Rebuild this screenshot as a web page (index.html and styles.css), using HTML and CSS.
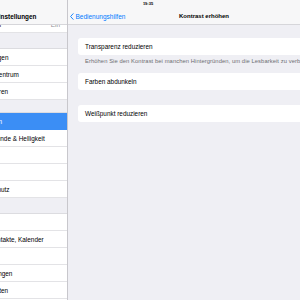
FILE: index.html
```html
<!DOCTYPE html>
<html lang="de">
<head>
    <meta charset="UTF-8">
    <meta name="viewport" content="width=device-width, initial-scale=1.0">
    <title>Kontrast erhöhen</title>
    <link rel="stylesheet" href="styles.css">
</head>
<body>
    <div class="screen">
        <aside class="master">
            <div class="master-inner">
                <header class="master-bar">
                    <span class="bar-title">Einstellungen</span>
                </header>
                <div class="list">
                    <div class="row"><span class="label">Bluetooth</span><span class="value">Ein</span></div>
                    <div class="gap gap-first"></div>
                    <div class="row"><span class="label">Mitteilungen</span></div>
                    <div class="row"><span class="label">Kontrollzentrum</span></div>
                    <div class="row"><span class="label">Nicht stören</span></div>
                    <div class="gap gap-small"></div>
                    <div class="row selected"><span class="label">Allgemein</span></div>
                    <div class="row"><span class="label">Hintergründe &amp; Helligkeit</span></div>
                    <div class="row"><span class="label">Töne</span></div>
                    <div class="row"><span class="label">Code</span></div>
                    <div class="row"><span class="label">Datenschutz</span></div>
                    <div class="gap"></div>
                    <div class="row"><span class="label">iCloud</span></div>
                    <div class="row"><span class="label">Mail, Kontakte, Kalender</span></div>
                    <div class="row"><span class="label">Notizen</span></div>
                    <div class="row"><span class="label">Erinnerungen</span></div>
                    <div class="row"><span class="label">Nachrichten</span></div>
                    <div class="row"><span class="label">FaceTime</span></div>
                </div>
            </div>
        </aside>

        <main class="detail">
            <header class="detail-bar">
                <div class="status">19:35</div>
                <div class="nav">
                    <a class="back">
                        <svg class="chevron" width="4" height="7" viewBox="0 0 4 7">
                            <polyline points="3.4,0.4 0.6,3.5 3.4,6.6" fill="none" stroke="#007aff" stroke-width="0.9"/>
                        </svg>
                        Bedienungshilfen
                    </a>
                    <span class="nav-title">Kontrast erhöhen</span>
                    <span></span>
                </div>
            </header>

            <div class="content">
                <div class="cell">Transparenz reduzieren</div>
                <p class="note">Erhöhen Sie den Kontrast bei manchen Hintergründen, um die Lesbarkeit zu verbessern.</p>
                <div class="cell cell-second">Farben abdunkeln</div>
                <div class="cell cell-third">Weißpunkt reduzieren</div>
            </div>
        </main>
    </div>
</body>
</html>
```

FILE: styles.css
```css
*{
	box-sizing: border-box;
}
body{
	margin: 0;
	width: 300px;
	height: 300px;
	overflow: hidden;
	font-family: "Liberation Sans", Arial, sans-serif;
	color: #000;
}
.screen{
	display: flex;
	height: 300px;
	background-color: #efeff4;
}

/* left column */
.master{
	flex: none;
	width: 68px;
	overflow: hidden;
	background-color: #fff;
	border-right: 1px solid #c8c7cc;
}
.master-inner{
	width: 124px;
	margin-left: -57px;
}
.master-bar{
	position: relative;
	z-index: 1;
	display: flex;
	justify-content: center;
	align-items: center;
	height: 25px;
	padding: 8px 0 0 21px;
	background-color: #f7f7f8;
	border-bottom: 1px solid #d6d6da;
}
.bar-title{
	font-size: 6.4px;
	font-weight: bold;
}
.list{
	margin-top: -9px;
}
.row{
	display: flex;
	justify-content: space-between;
	align-items: center;
	height: 17px;
	padding: 0 7px 0 31px;
	font-size: 6.4px;
	white-space: nowrap;
	border-bottom: 1px solid #e3e3e6;
}
.value{
	color: #8e8e93;
}
.row.selected{
	background-color: #3b8ef5;
	color: #fff;
	border-bottom-color: #3b8ef5;
}
.gap{
	height: 16px;
	background-color: #efeff4;
	border-bottom: 1px solid #dcdce0;
}
.gap-small{
	height: 13px;
}

/* right column */
.detail{
	flex: none;
	width: 272px;
}
.detail-bar{
	height: 25px;
	background-color: #f7f7f8;
	border-bottom: 1px solid #d6d6da;
}
.status{
	height: 8px;
	padding: 1px 112px 0 0;
	font-size: 4px;
	font-weight: bold;
	text-align: center;
}
.nav{
	display: grid;
	grid-template-columns: 1fr auto 1fr;
	align-items: center;
	height: 16px;
}
.back{
	display: flex;
	align-items: center;
	gap: 1.5px;
	padding-left: 2px;
	font-size: 6.5px;
	color: #007aff;
}
.nav-title{
	font-size: 6px;
	font-weight: bold;
}
.content{
	padding: 13px 10px 0 10px;
}
.cell{
	display: flex;
	align-items: center;
	height: 17px;
	padding-left: 7px;
	font-size: 6.4px;
	background-color: #fff;
	border-radius: 3px;
}
.note{
	margin: 0;
	padding: 3px 0 0 7px;
	height: 9px;
	line-height: 6px;
	font-size: 5.8px;
	letter-spacing: 0.08px;
	color: #6d6d72;
	white-space: nowrap;
}
.cell-second{
	margin-top: 9px;
}
.cell-third{
	margin-top: 15px;
}
```
